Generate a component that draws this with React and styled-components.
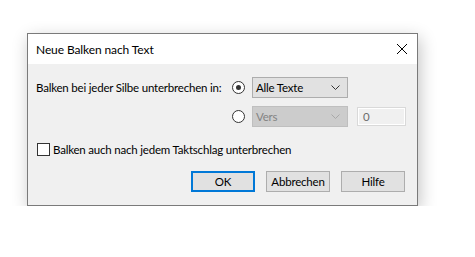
import React from 'react';
import styled, { createGlobalStyle } from 'styled-components';

const GlobalStyle = createGlobalStyle`
  html, body {
    margin: 0;
    background: #ffffff;
    font-family: Lato, "Liberation Sans", Arial, sans-serif;
    font-size: 11.5px;
    letter-spacing: -0.2px;
    color: #000000;
  }
`;

const Page = styled.div`
  padding: 33px 0 0 27px;
`;

const Dialog = styled.div`
  width: 389px;
  border: 1px solid #7a7a7a;
  background: #f0f0f0;
  box-shadow: 2px 5px 16px rgba(0, 0, 0, 0.24);
`;

const TitleBar = styled.div`
  height: 30px;
  background: #ffffff;
  display: flex;
  align-items: center;
  justify-content: space-between;
  padding: 0 10px 0 8px;
`;

const Title = styled.span`
  font-size: 12px;
  letter-spacing: -0.1px;
`;

const CloseButton = styled.div`
  width: 10px;
  height: 10px;
  display: flex;
`;

const Body = styled.div`
  padding: 13px 12px 13px 8px;
  display: flex;
  flex-direction: column;
`;

const OptionGrid = styled.div`
  display: grid;
  grid-template-columns: 196px 13px 104px 57px;
  grid-auto-rows: 21px;
  row-gap: 8px;
  align-items: center;
`;

const Label = styled.span`
  white-space: nowrap;
`;

const Radio = styled.span`
  width: 11px;
  height: 11px;
  border: 1px solid #333333;
  border-radius: 50%;
  background: #ffffff;
  display: flex;
  align-items: center;
  justify-content: center;
  &::after {
    content: '';
    width: 5px;
    height: 5px;
    border-radius: 50%;
    background: ${p => (p.$checked ? '#333333' : 'transparent')};
  }
`;

const Select = styled.div`
  margin-left: 7px;
  height: 19px;
  width: 84px;
  border: 1px solid ${p => (p.$disabled ? '#bfbfbf' : '#adadad')};
  background: ${p => (p.$disabled ? '#cccccc' : '#e1e1e1')};
  color: ${p => (p.$disabled ? '#838383' : '#000000')};
  display: flex;
  align-items: center;
  justify-content: space-between;
  padding: 0 7px 0 3px;
`;

const Chevron = styled.svg`
  width: 9px;
  height: 5px;
  stroke: ${p => (p.$disabled ? '#a8a8a8' : '#333333')};
  fill: none;
`;

const TextField = styled.div`
  margin-left: 8px;
  height: 17px;
  width: 42px;
  border: 1px solid #d9d9d9;
  box-shadow: inset 0 0 0 1px #ffffff;
  background: #f0f0f0;
  color: #6d6d6d;
  display: flex;
  align-items: center;
  padding: 0 0 0 5px;
`;

const CheckRow = styled.label`
  margin-top: 16px;
  display: flex;
  align-items: center;
  gap: 3px;
  padding-left: 1px;
  height: 13px;
`;

const Checkbox = styled.span`
  width: 11px;
  height: 11px;
  border: 1px solid #333333;
  background: #ffffff;
`;

const ButtonRow = styled.div`
  margin-top: 15px;
  display: flex;
  justify-content: flex-end;
  gap: 11px;
`;

const Button = styled.button`
  width: 64px;
  height: 21px;
  margin: 0;
  padding: 0;
  font-family: inherit;
  font-size: 11.5px;
  letter-spacing: inherit;
  color: #000000;
  background: #e1e1e1;
  border: ${p => (p.$default ? '2px solid #0078d7' : '1px solid #adadad')};
`;

const ChevronIcon = ({ disabled }) => (
  <Chevron $disabled={disabled} viewBox="0 0 9 5">
    <path d="M0.5 0.5 L4.5 4.5 L8.5 0.5" strokeWidth="1" />
  </Chevron>
);

export default function App() {
  return (
    <>
      <GlobalStyle />
      <Page>
        <Dialog>
          <TitleBar>
            <Title>Neue Balken nach Text</Title>
            <CloseButton>
              <svg width="10" height="10" viewBox="0 0 10 10">
                <path d="M0 0 L10 10 M10 0 L0 10" stroke="#000" strokeWidth="1" />
              </svg>
            </CloseButton>
          </TitleBar>
          <Body>
            <OptionGrid>
              <Label>Balken bei jeder Silbe unterbrechen in:</Label>
              <Radio $checked />
              <Select>
                Alle Texte
                <ChevronIcon />
              </Select>
              <span />
              <span />
              <Radio />
              <Select $disabled>
                Vers
                <ChevronIcon disabled />
              </Select>
              <TextField>0</TextField>
            </OptionGrid>
            <CheckRow>
              <Checkbox />
              <span>Balken auch nach jedem Taktschlag unterbrechen</span>
            </CheckRow>
            <ButtonRow>
              <Button $default>OK</Button>
              <Button>Abbrechen</Button>
              <Button>Hilfe</Button>
            </ButtonRow>
          </Body>
        </Dialog>
      </Page>
    </>
  );
}
